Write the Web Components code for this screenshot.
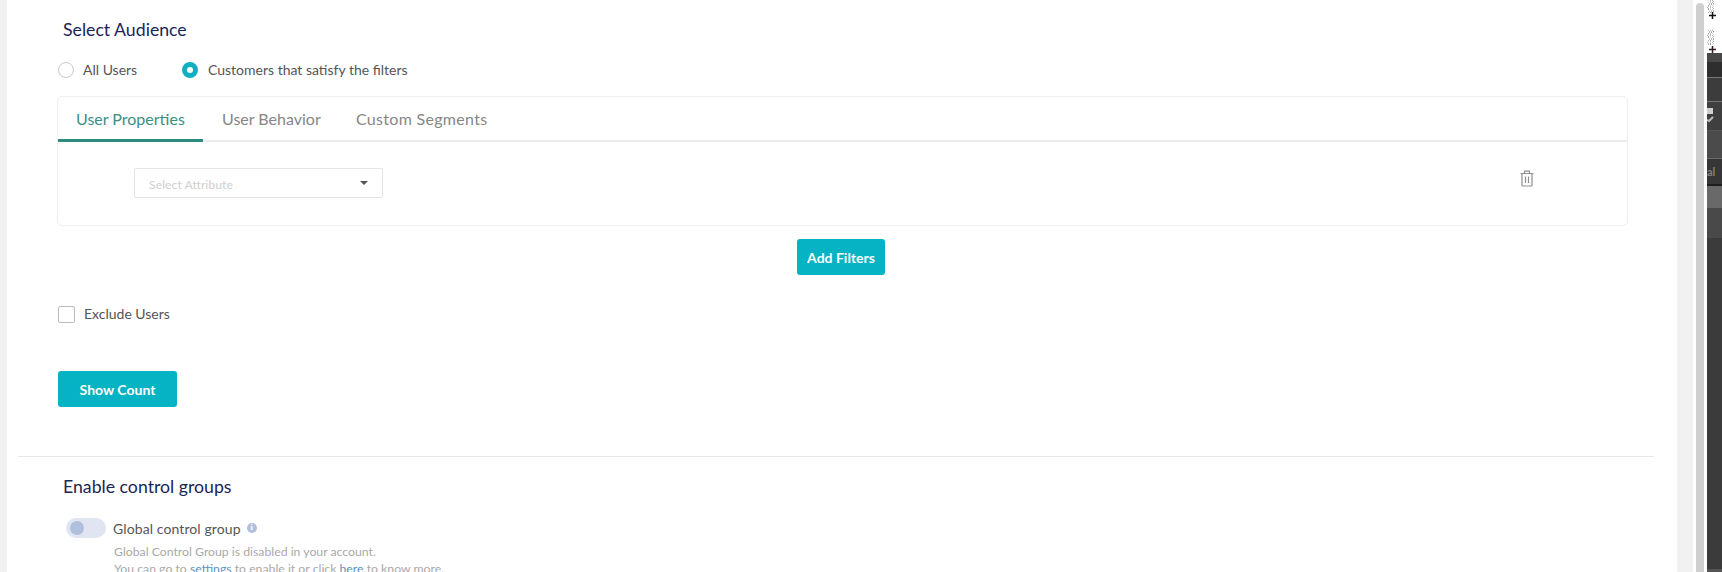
<!DOCTYPE html>
<html><head><meta charset="utf-8">
<style>
html,body{margin:0;padding:0;height:572px;width:1722px;overflow:hidden;background:#fff;font-family:Lato,"Liberation Sans",sans-serif}
</style></head><body>
<app-shell>
  <audience-panel></audience-panel>
</app-shell>
<script>
function def(name, html){
  customElements.define(name, class extends HTMLElement{
    constructor(){super();const r=this.attachShadow({mode:'open'});r.innerHTML=html;}
  });
}
let speck='';
[[0,13],[30,45]].forEach(([a,b])=>{for(let y=a;y<b;y++){for(let k=0;k<3;k++){const x=(y*7+k*5+y*y*3)%7;const o=(.25+((y+k*3)%4)*.15).toFixed(2);speck+=`<rect x="${x}" y="${y}" width="1" height="1" fill="#777" opacity="${o}"/>`;}}});
def('side-strip',`<style>
:host{display:flex;flex-direction:column;width:15px;flex:none;background:#3b3b3b;overflow:hidden}
.top{height:53px;background:#fff;flex:none}
.b{flex:none}
svg{display:block}
.a{height:9px;background:#484848}.c{height:15px;background:#2e2e2e}.d{height:1px;background:#777}
.e{height:23px;background:#3c3c3c}.f{height:1px;background:#777}.g{height:28px;background:#3f3f3f}
.h{height:1px;background:#555}.i{height:27px;background:#4b4b4b}.j{height:1px;background:#6a6a6a}
.k{height:25px;background:#363636;color:#808080;font:bold 11px/25px Lato,sans-serif;overflow:hidden;white-space:nowrap}
.l{height:2px;background:#1d1d1d}.m{height:22px;background:#696969}
.n{height:30px;background:#494949}.o{flex:1;background:#3b3b3b}.p{height:3px;flex:none;background:#555}
.k span{display:block;margin-left:0}
</style>
<div class="top"><svg width="15" height="53" viewBox="0 0 15 53">${speck}
<path d="M2 15.500H9M5.500 12V19" stroke="#111" stroke-width="1.500" fill="none"/><path d="M2 49.500H9M5.500 46V53" stroke="#301820" stroke-width="1.500" fill="none"/></svg></div>
<div class="b a"></div><div class="b c"></div><div class="b d"></div><div class="b e"></div><div class="b f"></div>
<div class="b g"><svg width="15" height="28" viewBox="0 0 15 28"><rect x="0" y="6" width="6" height="6" fill="#cfcfcf"/><path d="M0 18L2 19L6 15" stroke="#bdbdbd" stroke-width="2" fill="none"/></svg></div>
<div class="b h"></div><div class="b i"></div><div class="b j"></div>
<div class="b k"><span>al</span></div><div class="b l"></div><div class="b m"></div><div class="b n"></div><div class="o"></div><div class="p"></div>`);

def('app-shell',`<style>
:host{display:flex;width:1722px;height:572px;overflow:hidden;background:#fff}
.gut{width:7px;flex:none;background:#f1f1f1}
.main{flex:1;min-width:0;overflow:hidden;background:#fff}
.gray{width:16px;flex:none;background:#f1f1f1}
.track{width:14px;flex:none;padding:0 3px;box-sizing:border-box;background:#fff}
.thumb{height:100%;margin-top:3px;background:#cfcfcf;border-radius:4px 4px 0 0}
</style><div class="gut"></div><div class="main"><slot></slot></div><div class="gray"></div><div class="track"><div class="thumb"></div></div><side-strip></side-strip>`);

def('radio-opt',`<style>
:host{display:inline-flex;align-items:center;gap:9px;font-size:14px;color:#555;line-height:20px}
:host([checked]){gap:10px}
.r{width:16px;height:16px;box-sizing:border-box;border-radius:50%;border:1px solid #c2c8cf;background:#fff}
:host([checked]) .r{border:5px solid #0fb0c2}
</style><span class="r"></span><slot></slot>`);

def('tab-bar',`<style>
:host{display:flex;height:45px;box-sizing:border-box;border-bottom:2px solid #ebedef;font-size:16px;color:#868686;line-height:24px}
::slotted(span){box-sizing:border-box;height:45px;padding:10px 0 0;white-space:nowrap}
</style><slot></slot>`);

def('filter-select',`<style>
:host{display:flex;align-items:center;justify-content:space-between;width:249px;height:30px;box-sizing:border-box;border:1px solid #e2e4e6;border-radius:2px;padding:2px 14px 0;font-size:12.300px;color:#cfcfcf}
i{display:block;width:0;height:0;border:4px solid transparent;border-top:4px solid #555;border-bottom:0;margin-top:-2px}
</style><slot></slot><i></i>`);

def('trash-icon',`<style>:host{display:block;width:14px;height:17px}svg{display:block}</style>
<svg width="14" height="17" viewBox="0 0 14 17" fill="none" stroke="#8f8f8f" stroke-width="1.200"><path d="M.500 3.500H13.500M4.500 3.500V1.200H9.500V3.500M2 3.500V15.200Q2 16 2.800 16H11.200Q12 16 12 15.200V3.500M5.500 6.500V13M8.500 6.500V13"/></svg>`);

def('teal-button',`<style>
:host{display:inline-flex;align-items:center;justify-content:center;box-sizing:border-box;background:#05b3c4;border-radius:3px;color:#fff;font-weight:700;font-size:14px;height:36px}
</style><slot></slot>`);

def('check-opt',`<style>
:host{display:flex;align-items:center;gap:9px;font-size:14px;color:#555;line-height:20px}
.c{width:17px;height:17px;box-sizing:border-box;border:1px solid #b9bdc2;border-radius:2px;background:#fff}
</style><span class="c"></span><slot></slot>`);

def('toggle-switch',`<style>
:host{display:block;width:40px;height:20px;border-radius:10px;background:#e1e5f2;box-sizing:border-box;padding:3px 4px;flex:none}
b{display:block;width:14px;height:14px;border-radius:50%;background:#b0bfdc}
</style><b></b>`);

def('audience-panel',`<style>
:host{display:block;color:#555}
.head{font-size:17.700px;color:#1b2557;line-height:24px;font-weight:400;margin:0}
.sec{padding:18px 49px 0 51px}
.sec>.head{padding-left:5px}
.radios{display:flex;margin-top:18px;height:20px;align-items:center}
.radios radio-opt:first-child{width:124px}
.card{box-sizing:border-box;height:130px;margin:16px 0 0 -1px;border:1px solid #eeeeee;border-radius:5px}
.u{color:#3c8f82;width:145px;padding-left:18px!important;border-bottom:3px solid #2e8b7f}
.tab2{width:153px;padding-left:19px!important}
.tab3{letter-spacing:.3px}
.body{display:flex;align-items:flex-start;justify-content:space-between;padding:26px 93px 0 76px}
trash-icon{margin-top:2px}
.add{display:flex;justify-content:center;margin-top:13px;padding-right:4px}
.add teal-button{width:88px}
check-opt{margin-top:29px}
.show{margin-top:47px}
.show teal-button{width:119px}
hr{border:0;height:1px;background:#e6e6e6;margin:49px 23px 0 11px}
.low{padding:18px 0 0 56px}
.row{display:flex;align-items:center;gap:7px;margin:19px 0 0 3px;font-size:14px;letter-spacing:.1px;color:#555;height:20px;white-space:nowrap}
.info{width:10px;height:10px;border-radius:50%;background:#b0bfdc;color:#fff;font:bold 8px/10px "Liberation Serif",serif;text-align:center;margin-left:-1px}
.help{margin:5px 0 0 51px;font-size:12.250px;line-height:17px;color:#a9a9a9;white-space:nowrap}
.help a{color:#5b94bd;text-decoration:none}
</style>
<div class="sec">
  <h3 class="head">Select Audience</h3>
  <div class="radios"><radio-opt>All Users</radio-opt><radio-opt checked>Customers that satisfy the filters</radio-opt></div>
  <div class="card">
    <tab-bar><span class="u">User Properties</span><span class="tab2">User Behavior</span><span class="tab3">Custom Segments</span></tab-bar>
    <div class="body"><filter-select>Select Attribute</filter-select><trash-icon></trash-icon></div>
  </div>
  <div class="add"><teal-button>Add Filters</teal-button></div>
  <check-opt>Exclude Users</check-opt>
  <div class="show"><teal-button>Show Count</teal-button></div>
</div>
<hr>
<div class="low">
  <h3 class="head">Enable control groups</h3>
  <div class="row"><toggle-switch></toggle-switch><span>Global control group</span><span class="info">i</span></div>
  <div class="help">Global Control Group is disabled in your account.<br>You can go to <a>settings</a> to enable it or click <a>here</a> to know more.</div>
</div>`);
</script>
</body></html>
